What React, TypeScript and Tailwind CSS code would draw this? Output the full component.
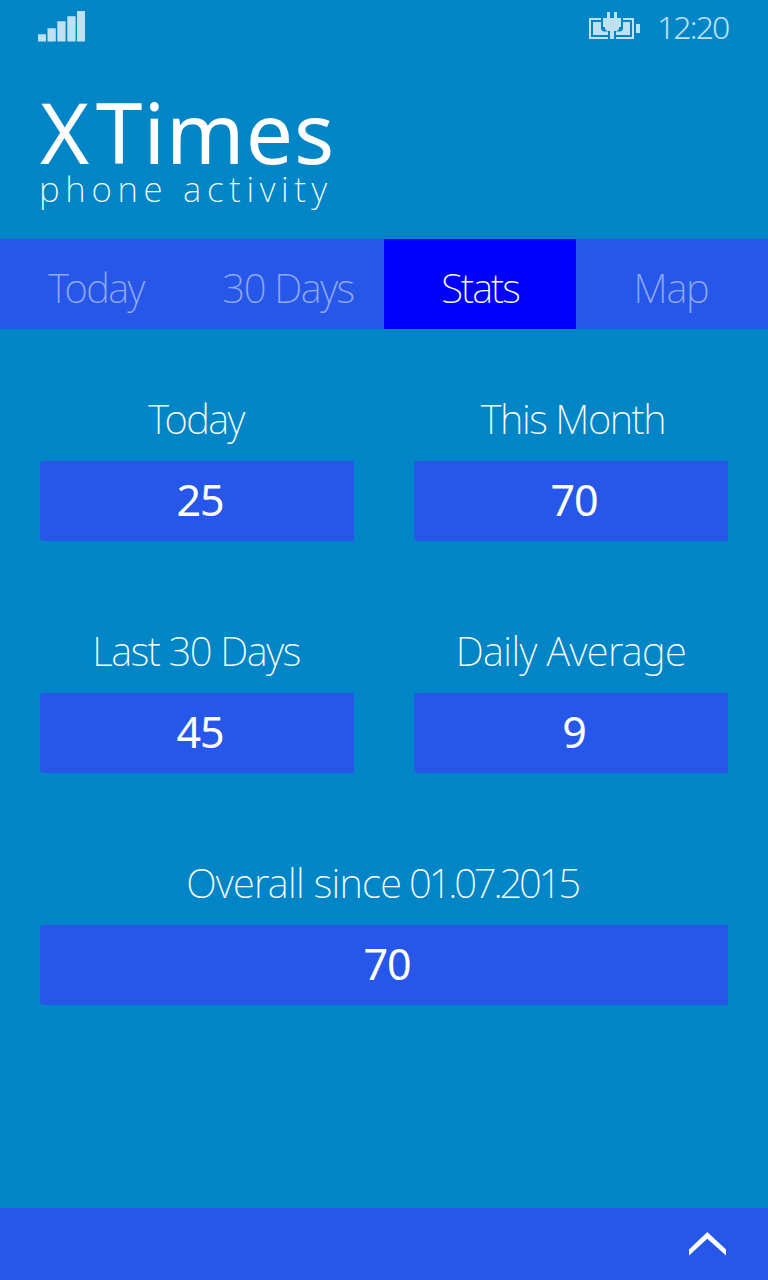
import type { ReactNode } from "react";

const tabs = [
  { name: "Today", className: "tracking-[-1.6px] text-white/50" },
  { name: "30 Days", className: "tracking-[-1.4px] text-white/50" },
  { name: "Stats", className: "tracking-[-2px] bg-[#0000ff] text-white" },
  { name: "Map", className: "pr-0.5 tracking-[-1.2px] text-white/50" },
];

const SignalIcon = () => (
  <svg width="47" height="31" viewBox="0 0 47 31" fill="#bfe0f1">
    <path d="M0 23.2h8V30.6H0zM9.5 17.2h8.3v13.4h-8.3zM19.3 10.3h8.3v20.3h-8.3zM29.3 5.3h8.3v25.3h-8.3zM39 0h8v30.6h-8z" />
  </svg>
);

const BatteryIcon = () => (
  <svg width="52" height="28" viewBox="0 0 52 28" fill="#bfe0f1">
    <path d="M0 6h12v2H2v17h17v2H0z" />
    <path d="M34 6h11v21H27v-2h16V8h-9z" />
    <path d="M47 12h4v9h-4z" />
    <path d="M4 10h8v6q0 3 3 3.500h4v3.500H4z" />
    <path d="M34 10h7v13H27v-3.500h4q3-.5 3-3.500z" />
    <path d="M18 0h3v6h4V0h3v6h4v9h-2v2l-2 2h-3v8h-4v-8h-3l-2-2v-2h-2V6h4z" />
  </svg>
);

type StatProps = {
  label: ReactNode;
  value: number;
  className?: string;
};

const Stat = ({ label, value, className }: StatProps) => (
  <div className={className}>
    <h2 className="h-[50px] pt-0.5 text-center text-[40px] leading-[48px] font-extralight whitespace-nowrap">{label}</h2>
    <div className="mt-[18px] h-20 rounded-l-[4px] bg-[#2657e9] pl-1.5 text-center text-[43px] leading-[77px] tracking-[-1px]">
      {value}
    </div>
  </div>
);

const App = () => {
  return (
    <div className="flex h-[1280px] w-[768px] flex-col overflow-hidden bg-[#0086c7] font-['Noto_Sans','Open_Sans',sans-serif] text-white">
      <div className="flex h-[89px] items-start justify-between pt-[11px] pr-10 pl-[38px] text-[#bfe0f1]">
        <SignalIcon />
        <div className="flex">
          <div className="pt-px">
            <BatteryIcon />
          </div>
          <span className="ml-4 w-[71px] text-[32px] leading-8 font-light tracking-[-1.9px]">12:20</span>
        </div>
      </div>

      <header className="h-[150px] pt-[7px] pl-10">
        <h1 className="text-[84px] leading-[72px] tracking-[1px]">
          <span className="tracking-[6.5px]">X</span>Times
        </h1>
        <p className="-ml-px text-[35px] leading-[42px] font-extralight tracking-[5.7px]">phone activity</p>
      </header>

      <nav className="grid h-[90px] grid-cols-4 bg-[#2657e9]">
        {tabs.map((tab) => (
          <button
            key={tab.name}
            className={`pt-[7px] text-[40px] font-extralight whitespace-nowrap ${tab.className}`}
          >
            {tab.name}
          </button>
        ))}
      </nav>

      <main className="grid flex-1 grid-cols-2 content-start gap-x-[60px] gap-y-[84px] px-10 pt-16">
        <Stat label="Today" value={25} className="[&>h2]:pr-0.5 [&>h2]:tracking-[-1.6px]" />
        <Stat label="This Month" value={70} className="[&>h2]:pl-1 [&>h2]:tracking-[-1.4px]" />
        <Stat label="Last 30 Days" value={45} className="[&>h2]:pr-0.5 [&>h2]:tracking-[-1.4px]" />
        <Stat label="Daily Average" value={9} className="[&>h2]:tracking-[-0.6px]" />
        <Stat
          label={
            <>
              Overall since <span className="-ml-0.5 tracking-[-3.2px]">01.07.2015</span>
            </>
          }
          value={70}
          className="col-span-2 [&>h2]:pr-1 [&>h2]:tracking-[-0.7px]"
        />
      </main>

      <footer className="flex h-[72px] items-start justify-end bg-[#2657e9] pt-6 pr-[42px]">
        <svg width="37" height="24" viewBox="0 0 37 24" fill="white">
          <path d="M0 17.500L18.300 0L37 17.500v6L18.300 6.800L0 23.500z" />
        </svg>
      </footer>
    </div>
  );
};
export default App;
